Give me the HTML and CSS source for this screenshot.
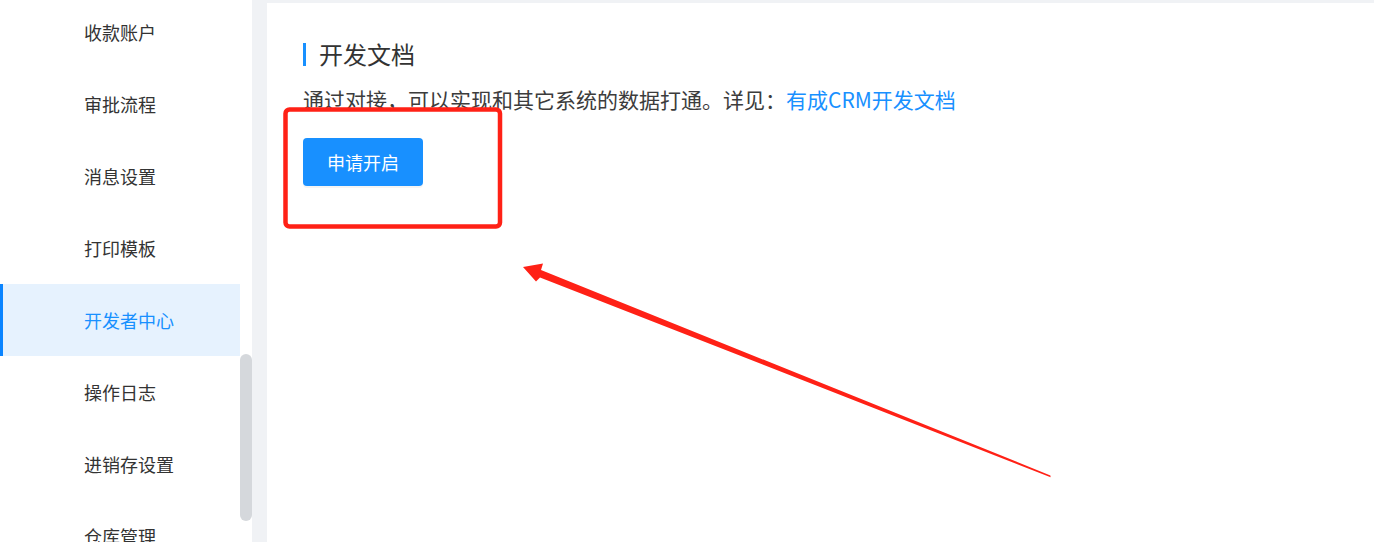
FILE: index.html
```html
<!DOCTYPE html>
<html lang="zh-CN">
<head>
  <meta charset="UTF-8">
  <title>开发者中心</title>
  <link rel="stylesheet" href="styles.css">
</head>
<body>
  <div class="sidebar">
    <ul class="menu">
      <li>收款账户</li>
      <li>审批流程</li>
      <li>消息设置</li>
      <li>打印模板</li>
      <li class="active">开发者中心</li>
      <li>操作日志</li>
      <li>进销存设置</li>
      <li>仓库管理</li>
    </ul>
    <div class="scroll-track">
      <div class="scroll-thumb"></div>
    </div>
  </div>

  <div class="main">
    <div class="card">
      <div class="section-title">
        <span class="title-bar"></span>
        <h2>开发文档</h2>
      </div>
      <p class="desc">通过对接，可以实现和其它系统的数据打通。详见：<a href="#">有成CRM开发文档</a></p>
      <button type="button">申请开启</button>
    </div>
  </div>

  <!-- annotation drawn over the screenshot -->
  <svg class="annotation" width="1374" height="542" viewBox="0 0 1374 542">
    <rect x="285.5" y="109.5" width="214.5" height="117" rx="4" fill="none" stroke="#ff2116" stroke-width="4.5"/>
    <polygon fill="#ff2116" points="523,267 543,263.5 541,270 1050.4,475.4 1050.6,477.2 540,277.5 536,281.5"/>
  </svg>
</body>
</html>
```

FILE: styles.css
```css
html, body {
  margin: 0;
  padding: 0;
  height: 542px;
  overflow: hidden;
}
body {
  display: flex;
  font-family: "Noto Sans CJK SC", "Noto Sans", sans-serif;
  color: #333;
  background-color: #f0f2f5;
  position: relative;
}
.sidebar {
  width: 252px;
  flex-shrink: 0;
  display: flex;
  background-color: #ffffff;
}
.menu {
  list-style: none;
  margin: -4px 0 0 0;
  padding: 0;
  width: 240px;
}
.menu li {
  height: 72px;
  line-height: 72px;
  padding-left: 84px;
  font-size: 18px;
  color: #333;
  box-sizing: border-box;
}
.menu li.active {
  background-color: #e6f2fe;
  color: #1890ff;
  border-left: 3px solid #0a84ff;
  padding-left: 81px;
}
.scroll-track {
  width: 12px;
}
.scroll-thumb {
  margin-top: 354px;
  height: 167px;
  border-radius: 6px;
  background-color: #d5d8dc;
}
.main {
  flex: 1;
  padding: 3px 0 0 15px;
}
.card {
  height: 100%;
  background-color: #ffffff;
  padding: 39px 0 0 36px;
  box-sizing: border-box;
}
.section-title {
  display: flex;
  align-items: center;
  height: 24px;
}
.title-bar {
  width: 3px;
  height: 23px;
  background-color: #1890ff;
  margin-right: 13px;
}
.section-title h2 {
  margin: 0;
  font-size: 24px;
  line-height: 24px;
  font-weight: normal;
  color: #333;
}
.desc {
  margin: 23px 0 0 0;
  font-size: 21px;
  line-height: 21px;
  color: #3c3c3c;
}
.desc a {
  color: #1890ff;
  text-decoration: none;
}
button {
  margin-top: 28px;
  width: 120px;
  height: 48px;
  border: none;
  border-radius: 4px;
  background-color: #1890ff;
  color: white;
  font-family: inherit;
  font-size: 18px;
  box-shadow: 0 2px 0 rgba(0, 0, 0, 0.045);
  cursor: pointer;
}
.annotation {
  position: absolute;
  left: 0;
  top: 0;
  pointer-events: none;
}
```
